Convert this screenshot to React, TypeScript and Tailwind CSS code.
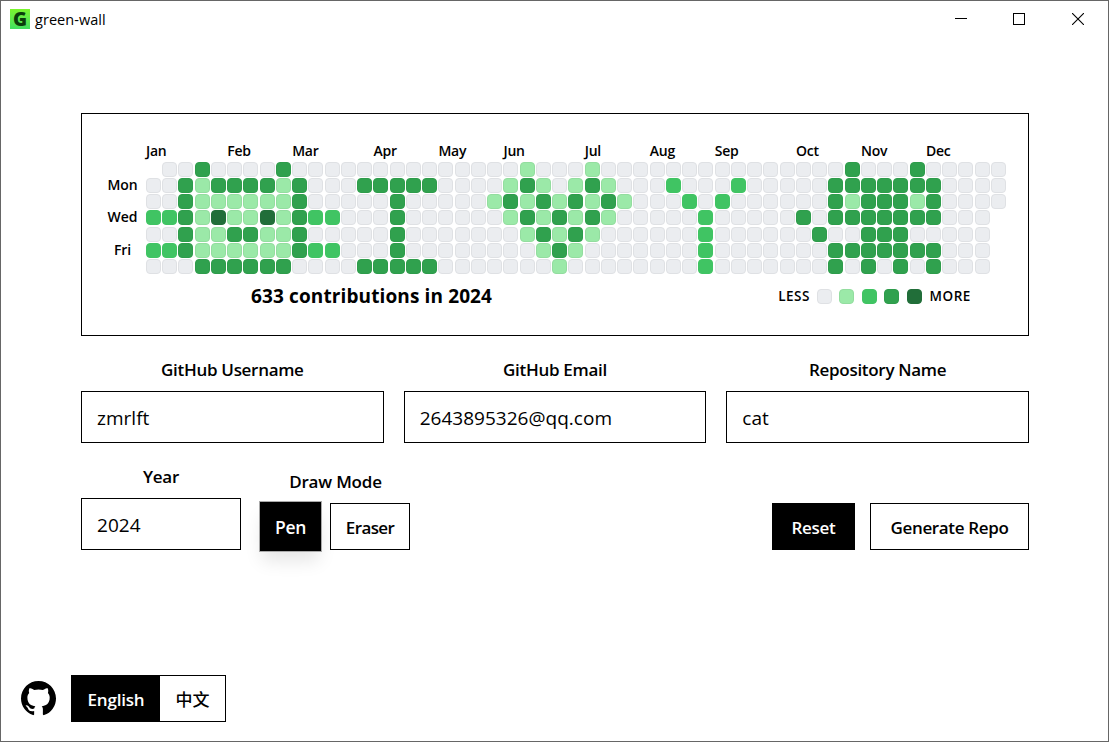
import React from "react";

type Run = [start: number, end: number, level: number];

const COLUMNS = Array.from({ length: 53 }, (_, i) => i);

const LEVELS = [
  "bg-[#ebedf0] border-[#dfe1e4]",
  "bg-[#9be9a8] border-[#93dd9f]",
  "bg-[#40c463] border-[#40c463]",
  "bg-[#30a14e] border-[#2e9c4b]",
  "bg-[#216e39] border-[#216e39]",
];

const ROWS: Run[][] = [
  [[3, 3, 3], [8, 8, 3], [23, 23, 1], [27, 27, 1], [43, 43, 3], [47, 47, 3]],
  [
    [2, 2, 3], [3, 3, 1], [4, 7, 3], [8, 8, 1], [9, 9, 3], [13, 17, 3],
    [22, 22, 1], [23, 23, 3], [24, 24, 1], [26, 26, 1], [27, 27, 3], [28, 28, 1],
    [32, 32, 2], [36, 36, 2], [42, 48, 3],
  ],
  [
    [2, 2, 3], [3, 8, 1], [9, 9, 3], [15, 15, 3],
    [21, 21, 1], [22, 22, 3], [23, 23, 1], [24, 24, 3], [25, 25, 1], [26, 26, 3], [27, 27, 1], [28, 28, 3], [29, 29, 1],
    [33, 33, 2], [35, 35, 2],
    [42, 42, 3], [43, 43, 1], [44, 46, 3], [47, 47, 1], [48, 48, 3],
  ],
  [
    [0, 1, 2], [2, 2, 3], [3, 3, 1], [4, 4, 4], [5, 6, 1], [7, 7, 4], [8, 8, 1], [9, 9, 3], [10, 11, 2], [15, 15, 3],
    [22, 22, 1], [23, 23, 3], [24, 24, 1], [25, 25, 3], [26, 26, 1], [27, 27, 3], [28, 28, 1],
    [34, 34, 2], [40, 40, 3], [42, 48, 3],
  ],
  [
    [2, 2, 3], [3, 4, 1], [5, 6, 3], [7, 8, 1], [9, 9, 3], [15, 15, 3],
    [23, 23, 1], [24, 24, 3], [25, 25, 1], [26, 26, 3], [27, 27, 1],
    [34, 34, 2], [41, 41, 3], [44, 46, 3],
  ],
  [
    [0, 1, 2], [2, 2, 3], [3, 8, 1], [9, 9, 3], [10, 11, 2], [15, 15, 3],
    [24, 24, 1], [25, 25, 3], [26, 26, 1], [34, 34, 2], [42, 48, 3],
  ],
  [[3, 8, 3], [13, 17, 3], [25, 25, 1], [34, 34, 2], [42, 42, 3], [44, 44, 3], [46, 46, 3], [48, 48, 3]],
];

const MONTHS: Record<number, string> = {
  0: "Jan", 5: "Feb", 9: "Mar", 14: "Apr", 18: "May", 22: "Jun",
  27: "Jul", 31: "Aug", 35: "Sep", 40: "Oct", 44: "Nov", 48: "Dec",
};

function levelAt(row: number, col: number) {
  return ROWS[row].find(([s, e]) => col >= s && col <= e)?.[2] ?? 0;
}

function inYear(row: number, col: number) {
  return !(col === 0 && row === 0) && !(col === 52 && row > 2);
}

function Calendar() {
  return (
    <section className="h-[223px] w-full border border-black">
      <div className="flex pt-[26.6px]">
        <div className="flex w-[63.9px] flex-col items-center pr-[5px] pl-[22px] pt-[28.2px] text-[14px] leading-[32.5px] font-semibold tracking-[-0.1px]">
          <span className="h-[32.5px]">Mon</span>
          <span className="h-[32.5px]">Wed</span>
          <span className="h-[32.5px]">Fri</span>
        </div>
        <div>
          <div className="flex h-[21px] gap-[1.25px]">
            {COLUMNS.map((c) => (
              <span key={c} className="w-[15px] text-[14px] leading-[19px] font-semibold tracking-[-0.2px] whitespace-nowrap">
                {MONTHS[c] ?? ""}
              </span>
            ))}
          </div>
          <div className="flex flex-col gap-[1.25px]">
            {ROWS.map((_, r) => (
              <div key={r} className="flex gap-[1.25px]">
                {COLUMNS.map((c) => (
                  <span
                    key={c}
                    className={`size-[15px] shrink-0 rounded-[4px] border ${inYear(r, c) ? LEVELS[levelAt(r, c)] : "invisible"}`}
                  />
                ))}
              </div>
            ))}
          </div>
        </div>
      </div>
      <div className="mt-[6px] flex h-[32px] items-center justify-between pr-[57px] pl-[169px]">
        <h2 className="text-[19px] font-bold tracking-[0.12px]">633 contributions in 2024</h2>
        <div className="flex items-center text-[13.5px] font-semibold">
          <span className="tracking-[0.5px]">LESS</span>
          <div className="mr-[7.5px] ml-[7px] flex gap-[7.5px]">
            {LEVELS.map((tone) => (
              <span key={tone} className={`size-[15px] rounded-[4px] border ${tone}`} />
            ))}
          </div>
          <span className="tracking-[0.6px]">MORE</span>
        </div>
      </div>
    </section>
  );
}

function Field({ label, value }: { label: string; value: string }) {
  return (
    <label className="flex flex-col">
      <span className="mb-[8px] h-[26px] text-center text-[17px] leading-[26px] font-semibold tracking-[-0.3px]">{label}</span>
      <input defaultValue={value} className="h-[52px] w-full border border-black bg-white px-[15px] pt-[2px] text-[19px] tracking-[0.02px] outline-none" />
    </label>
  );
}

function TitleBar() {
  return (
    <header className="flex h-[36px] items-center justify-between">
      <div className="flex items-center gap-[5px] pl-[9px]">
        <span className="flex size-[20px] items-center justify-center bg-linear-to-b from-[#7af52b] to-[#3ee05e] text-[19px] leading-none font-black text-[#0b3d0b]">G</span>
        <span className="pt-[2px] text-[14.5px] leading-[20px] tracking-[0.05px]">green-wall</span>
      </div>
      <div className="flex items-center gap-[47px] pr-[24px]">
        <svg className="-mr-[1px]" width="12" height="12" viewBox="0 0 12 12" shapeRendering="crispEdges"><path d="M0 5.5H12" stroke="#000" /></svg>
        <svg width="12" height="12" viewBox="0 0 12 12" shapeRendering="crispEdges"><rect x="0.5" y="0.5" width="11" height="11" fill="none" stroke="#000" /></svg>
        <svg width="12" height="12" viewBox="0 0 12 12"><path d="M0 0L12 12M12 0L0 12" stroke="#000" strokeWidth="1.1" /></svg>
      </div>
    </header>
  );
}

export default function App() {
  return (
    <div className="flex h-[742px] w-[1109px] flex-col border border-[#666] bg-white font-['Open_Sans','Noto_Sans_CJK_SC',sans-serif] text-black">
      <TitleBar />
      <main className="flex flex-1 flex-col px-[80px] pr-[79px] pt-[76px]">
        <Calendar />
        <div className="mt-[21px] grid grid-cols-3 gap-[20px]">
          <Field label="GitHub Username" value="zmrlft" />
          <Field label="GitHub Email" value="2643895326@qq.com" />
          <Field label="Repository Name" value="cat" />
        </div>
        <div className="mt-[21px] flex items-end">
          <div className="w-[160px]">
            <Field label="Year" value="2024" />
          </div>
          <div className="ml-[20px] flex w-[149px] flex-col">
            <span className="mb-[8px] text-center text-[17px] leading-[26px] font-semibold tracking-[-0.2px]">Draw Mode</span>
            <div className="flex h-[47px] justify-between">
              <button className="-mt-[2px] -ml-[2px] h-[51px] w-[63px] shrink-0 border border-[#aaa] bg-black pt-[2px] text-[17.5px] font-semibold tracking-[-0.3px] text-white shadow-[0_12px_18px_-3px_rgba(0,0,0,0.1)]">Pen</button>
              <button className="h-[47px] w-[80px] border border-black pt-[3px] text-[17px] font-semibold tracking-[-0.6px]">Eraser</button>
            </div>
          </div>
          <div className="ml-auto flex gap-[15px]">
            <button className="h-[47px] w-[83px] bg-black pt-[3px] text-[17px] font-semibold tracking-[-0.3px] text-white">Reset</button>
            <button className="h-[47px] w-[159px] border border-black pt-[3px] text-[17px] font-semibold tracking-[-0.35px]">Generate Repo</button>
          </div>
        </div>
      </main>
      <footer className="flex items-center gap-[15px] pb-[19px] pl-[20px]">
        <svg width="35" height="35" viewBox="0 0 16 16" fill="#000">
          <path d="M8 0C3.58 0 0 3.58 0 8c0 3.54 2.29 6.53 5.47 7.59.4.07.55-.17.55-.38 0-.19-.01-.82-.01-1.49-2.01.37-2.53-.49-2.69-.94-.09-.23-.48-.94-.82-1.13-.28-.15-.68-.52-.01-.53.63-.01 1.08.58 1.23.82.72 1.21 1.87.87 2.33.66.07-.52.28-.87.51-1.07-1.78-.2-3.64-.89-3.64-3.95 0-.87.31-1.59.82-2.15-.08-.2-.36-1.02.08-2.12 0 0 .67-.21 2.2.82.64-.18 1.32-.27 2-.27s1.36.09 2 .27c1.53-1.04 2.2-.82 2.2-.82.44 1.1.16 1.92.08 2.12.51.56.82 1.27.82 2.15 0 3.07-1.87 3.75-3.65 3.95.29.25.54.73.54 1.48 0 1.07-.01 1.93-.01 2.2 0 .21.15.46.55.38A8.01 8.01 0 0 0 16 8c0-4.42-3.58-8-8-8Z" />
        </svg>
        <div className="flex h-[47px] w-[155px] border border-black text-[17px] font-semibold">
          <button className="w-[88px] bg-black pt-[3px] tracking-[-0.2px] text-white">English</button>
          <button className="flex-1 pt-[2px] font-medium">中文</button>
        </div>
      </footer>
    </div>
  );
}
